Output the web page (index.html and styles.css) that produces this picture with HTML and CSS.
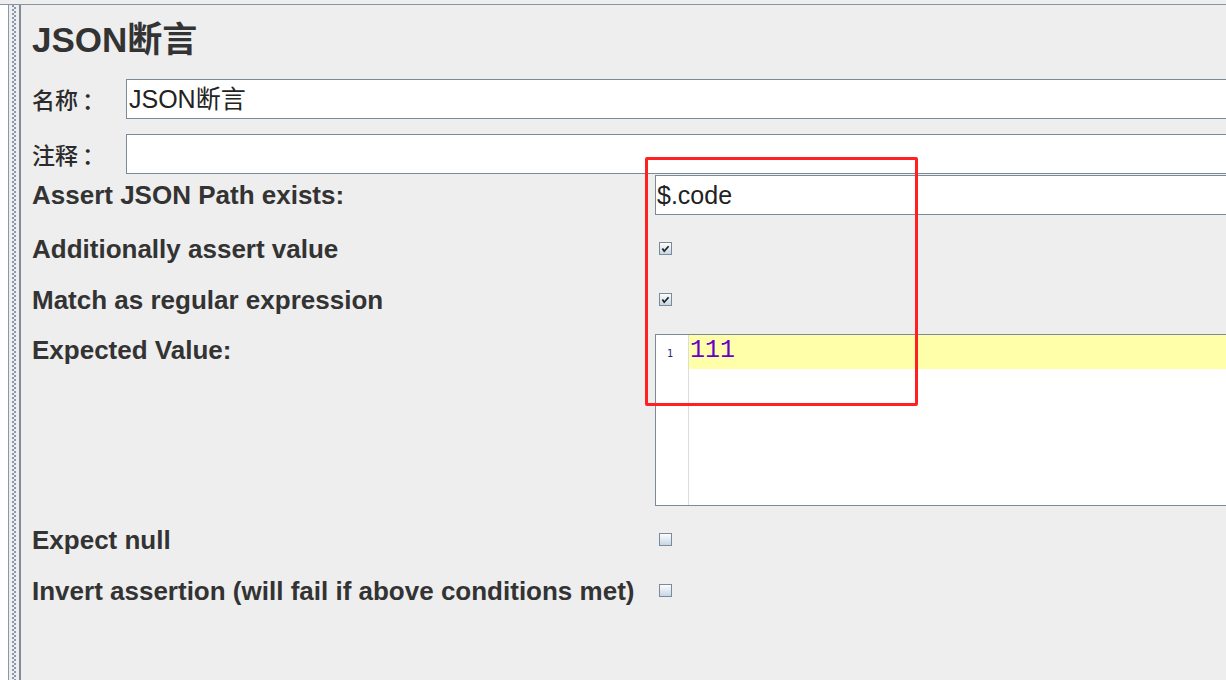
FILE: index.html
```html
<!DOCTYPE html>
<html lang="zh-CN">
<head>
<meta charset="utf-8">
<title>JSON断言</title>
<link rel="stylesheet" href="styles.css">
</head>
<body>
<div class="app">
  <div class="frame">
    <div class="tree"></div>
    <div class="splitter"></div>
    <div class="panel">
      <h1 class="title">JSON断言</h1>
      <div class="named-row">
        <span class="cjk-label">名称<span class="colon">：</span></span>
        <div class="field field-name">JSON断言</div>
      </div>
      <div class="named-row named-row-second">
        <span class="cjk-label">注释<span class="colon">：</span></span>
        <div class="field field-name"></div>
      </div>
      <div class="form">
        <div class="label row-path">Assert JSON Path exists:</div>
        <div class="control row-path"><div class="field field-path">$.code</div></div>

        <div class="label row-check row-first-check">Additionally assert value</div>
        <div class="control row-check row-first-check">
          <svg class="checkbox" width="13" height="13" viewBox="0 0 13 13"><defs><linearGradient id="cbg1" x1="0" y1="0" x2="0" y2="1"><stop offset="0" stop-color="#ffffff"/><stop offset="1" stop-color="#c4d4e4"/></linearGradient></defs><rect x="0.5" y="0.5" width="12" height="12" fill="url(#cbg1)" stroke="#7b8a99"/><path d="M3.4 6.6 L5.2 9.2 L9.6 4.2" fill="none" stroke="#1e1e1e" stroke-width="1.7"/></svg>
        </div>

        <div class="label row-check">Match as regular expression</div>
        <div class="control row-check">
          <svg class="checkbox" width="13" height="13" viewBox="0 0 13 13"><defs><linearGradient id="cbg2" x1="0" y1="0" x2="0" y2="1"><stop offset="0" stop-color="#ffffff"/><stop offset="1" stop-color="#c4d4e4"/></linearGradient></defs><rect x="0.5" y="0.5" width="12" height="12" fill="url(#cbg2)" stroke="#7b8a99"/><path d="M3.4 6.6 L5.2 9.2 L9.6 4.2" fill="none" stroke="#1e1e1e" stroke-width="1.7"/></svg>
        </div>

        <div class="label row-expected">Expected Value:</div>
        <div class="control row-expected">
          <div class="editor">
            <div class="gutter"><span class="lineno">1</span></div>
            <div class="code">
              <div class="code-line">111</div>
            </div>
          </div>
        </div>

        <div class="label row-check row-after-editor">Expect null</div>
        <div class="control row-check row-after-editor">
          <svg class="checkbox" width="13" height="13" viewBox="0 0 13 13"><defs><linearGradient id="cbg3" x1="0" y1="0" x2="0" y2="1"><stop offset="0" stop-color="#ffffff"/><stop offset="1" stop-color="#c4d4e4"/></linearGradient></defs><rect x="0.5" y="0.5" width="12" height="12" fill="url(#cbg3)" stroke="#7b8a99"/></svg>
        </div>

        <div class="label row-check">Invert assertion (will fail if above conditions met)</div>
        <div class="control row-check">
          <svg class="checkbox" width="13" height="13" viewBox="0 0 13 13"><defs><linearGradient id="cbg4" x1="0" y1="0" x2="0" y2="1"><stop offset="0" stop-color="#ffffff"/><stop offset="1" stop-color="#c4d4e4"/></linearGradient></defs><rect x="0.5" y="0.5" width="12" height="12" fill="url(#cbg4)" stroke="#7b8a99"/></svg>
        </div>
      </div>
      <div class="highlight-box"></div>
    </div>
  </div>
</div>
</body>
</html>
```

FILE: styles.css
```css
html, body {
  margin: 0;
  padding: 0;
}
body {
  background: #eeeeee;
  font-family: "Liberation Sans", Arial, "Noto Sans CJK SC", sans-serif;
  color: #333333;
}
.app {
  width: 1226px;
  height: 680px;
  overflow: hidden;
  padding-top: 4px;
  box-sizing: border-box;
  background: #eeeeee;
}
.frame {
  display: flex;
  height: 676px;
  border-top: 1px solid #8794a2;
}
.tree {
  width: 8px;
  background: #ffffff;
  border-right: 1px solid #8a97a5;
  flex: none;
}
.splitter {
  width: 10px;
  flex: none;
  background-color: #eeeeee;
  background-image:
    radial-gradient(circle at 1px 1px, #8a99aa 0.8px, transparent 1.1px),
    radial-gradient(circle at 1px 1px, #8a99aa 0.8px, transparent 1.1px);
  background-size: 4px 4px, 4px 4px;
  background-position: 3px 0px, 5px 2px;
  background-repeat: repeat-y, repeat-y;
}
.panel {
  position: relative;
  flex: 1;
  border-left: 2px solid #7e8b98;
  padding-left: 11px;
  overflow: hidden;
}
.title {
  margin: 15px 0 0 0;
  font-size: 35px;
  line-height: 40px;
  font-weight: bold;
  font-family: "Liberation Sans", Arial, "Noto Sans CJK SC", sans-serif;
  color: #333333;
}
.named-row {
  display: flex;
  align-items: center;
  margin-top: 19px;
  height: 40px;
}
.named-row-second {
  margin-top: 15px;
}
.cjk-label {
  width: 94px;
  flex: none;
  font-family: "Noto Sans CJK SC", sans-serif;
  font-size: 23px;
  font-weight: 500;
  color: #2b2b2b;
}
.colon {
  display: inline-block;
  padding-left: 4px;
}
.field {
  box-sizing: border-box;
  height: 40px;
  background: #ffffff;
  border: 1px solid #7b8a99;
  border-right: none;
  font-family: "Liberation Sans", Arial, "Noto Sans CJK SC", sans-serif;
  font-size: 25px;
  line-height: 38px;
  color: #222222;
  white-space: nowrap;
}
.field-name {
  flex: 1;
  padding-left: 2px;
  margin-right: -20px;
}
.field-path {
  flex: 1;
  padding-left: 1px;
  margin-right: -20px;
}
.form {
  display: grid;
  grid-template-columns: 623px 1fr;
  margin-top: 1px;
}
.label {
  font-size: 26px;
  font-weight: bold;
  line-height: 30px;
  color: #333333;
  white-space: nowrap;
  display: flex;
  align-items: center;
}
.control {
  display: flex;
  align-items: center;
}
.row-path {
  height: 40px;
}
.row-check {
  height: 51px;
}
.row-first-check {
  margin-top: 8px;
}
.checkbox {
  margin-left: 4px;
  display: block;
}
.row-expected {
  margin-top: 9px;
  align-items: flex-start;
}
.label.row-expected {
  line-height: 32px;
}
.row-after-editor {
  margin-top: 8px;
}
.editor {
  flex: 1;
  margin-right: -20px;
  height: 172px;
  box-sizing: border-box;
  border: 1px solid #7b8a99;
  border-right: none;
  background: #ffffff;
  display: flex;
}
.gutter {
  width: 32px;
  flex: none;
  border-right: 1px solid #dddddd;
}
.lineno {
  display: block;
  text-align: right;
  padding-right: 15px;
  padding-top: 13px;
  font-family: "DejaVu Sans Mono", monospace;
  font-size: 10px;
  line-height: 12px;
  color: #1a2a6a;
}
.code {
  flex: 1;
}
.code-line {
  height: 34px;
  background: #ffffaa;
  font-family: "Liberation Mono", "DejaVu Sans Mono", monospace;
  font-size: 25px;
  line-height: 32px;
  color: #6a00c8;
  padding-left: 1px;
}
.highlight-box {
  position: absolute;
  left: 624px;
  top: 152px;
  width: 267px;
  height: 243px;
  border: 3px solid #ff2121;
  border-radius: 2px;
}
```
